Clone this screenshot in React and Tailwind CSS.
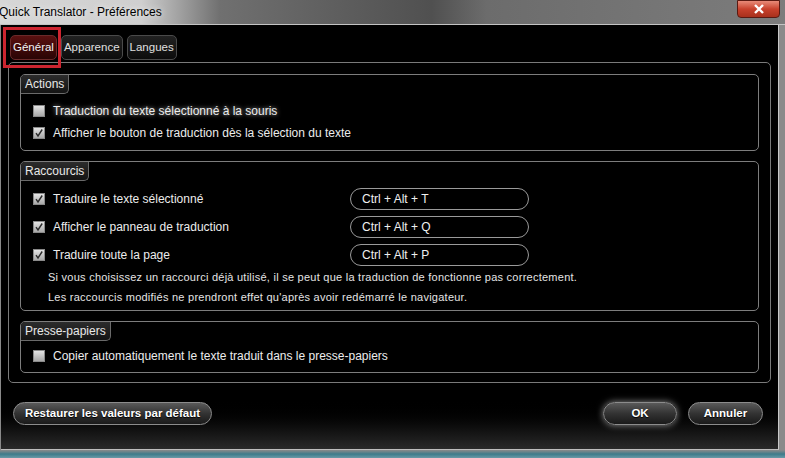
import React from "react";

const font = { fontFamily: '"Liberation Sans", Arial, sans-serif' };

const Check = ({ on }) => (
  <span className="w-[12px] h-[12px] shrink-0 border border-[#8a8a8a] bg-gradient-to-b from-[#e4e4e4] to-[#a8a8a8] flex items-center justify-center">
    {on && (
      <svg width="10" height="10" viewBox="0 0 10 10">
        <path d="M2 5.2 L4 8 L8.2 1.5" stroke="#2a2a2a" strokeWidth="1.4" fill="none" />
      </svg>
    )}
  </span>
);

const Item = ({ on, glow, children }) => (
  <div className="flex items-center h-[22px] pl-[12px] gap-[8px]">
    <Check on={on} />
    <span
      className={
        "text-[12px] text-[#ececec] " +
        (glow ? "[text-shadow:0_0_4px_rgba(255,255,255,0.7)]" : "")
      }
    >
      {children}
    </span>
  </div>
);

const Group = ({ label, children, cls }) => (
  <div className={"border border-[#7d7d7d] rounded-[5px] " + cls}>
    <div className="flex w-fit items-center h-[19px] px-[4px] text-[12px] text-[#e8e8e8] bg-gradient-to-b from-[#2c2c2c] to-[#141414] border-r border-b border-[#6a6a6a] rounded-tl-[4px] rounded-br-[5px]">
      {label}
    </div>
    {children}
  </div>
);

const Key = ({ children }) => (
  <div className="w-[179px] h-[22px] rounded-full border border-[#9a9a9a] pl-[11px] flex items-center text-[12px] text-[#f0f0f0]">
    {children}
  </div>
);

const Btn = ({ children, cls }) => (
  <button
    className={
      "h-[23px] rounded-full border border-[#8c8c8c] bg-gradient-to-b from-[#5a5a5a] via-[#333] to-[#1a1a1a] text-white font-bold text-[11.5px] [text-shadow:0_1px_1px_#000] " +
      cls
    }
  >
    {children}
  </button>
);

const Tab = ({ active, children }) => (
  <div
    className={
      "px-[2px] flex items-center text-[11.5px] rounded-[5px] border " +
      (active
        ? "text-[#f2f2f2] bg-gradient-to-b from-[#5a1010] to-[#2a0505] border-[#6a2a2a]"
        : "text-[#e0e0e0] bg-gradient-to-b from-[#222] to-[#0c0c0c] border-[#4a4a4a]")
    }
  >
    {children}
  </div>
);

const App = () => {
  return (
    <div
      className="w-[785px] h-[458px] relative overflow-hidden flex flex-col bg-[#8a8a8a]"
      style={font}
    >
      {/* title bar */}
      <div className="h-[25px] shrink-0 flex items-center bg-[linear-gradient(to_right,#d6d6d6_0%,#cfcfcf_18%,#707070_28%,#505050_55%,#6c6c6c_62%,#7c7c7c_100%)] border-b border-[#c4c4c4]">
        <span className="text-[12px] text-black -ml-[1px] [text-shadow:0_0_6px_rgba(255,255,255,0.9)]">
          Quick Translator - Préférences
        </span>
      </div>
      <div className="absolute top-0 right-[5px] w-[43px] h-[18px] rounded-b-[4px] border border-[#5a1a12] bg-gradient-to-b from-[#e88a78] via-[#c8412c] to-[#a8301c] flex items-center justify-center">
        <svg width="12" height="10" viewBox="0 0 12 10">
          <path d="M2 1 L10 9 M10 1 L2 9" stroke="#fff" strokeWidth="2.4" />
        </svg>
      </div>

      {/* body */}
      <div className="flex-1 flex flex-col ml-[1px] mr-[6px] border-r border-[#c8c8c8] border-b border-b-[#bdbdbd] bg-gradient-to-b from-black from-[88%] to-[#2a2a2a]">
        {/* tabs */}
        <div className="flex gap-[4px] ml-[9px] mt-[10px] h-[25px] items-stretch">
          <Tab active>Général</Tab>
          <Tab>Apparence</Tab>
          <Tab>Langues</Tab>
        </div>

        {/* panel */}
        <div className="mx-[7px] mt-[2px] h-[321px] border border-[#7a7a7a] rounded-[5px] px-[11px] pt-[11px] flex flex-col gap-[10px]">
          <Group label="Actions" cls="h-[77px]">
            <div className="pt-[6px]">
              <Item glow>Traduction du texte sélectionné à la souris</Item>
              <Item on>Afficher le bouton de traduction dès la sélection du texte</Item>
            </div>
          </Group>

          <Group label="Raccourcis" cls="h-[150px]">
            <div className="pt-[7px] flex flex-col gap-[6px]">
              {[
                ["Traduire le texte sélectionné", "Ctrl + Alt + T"],
                ["Afficher le panneau de traduction", "Ctrl + Alt + Q"],
                ["Traduire toute la page", "Ctrl + Alt + P"],
              ].map(([t, k]) => (
                <div key={t} className="flex items-center">
                  <div className="w-[329px]">
                    <Item on>{t}</Item>
                  </div>
                  <Key>{k}</Key>
                </div>
              ))}
            </div>
            <div className="pl-[27px] pt-[1px] text-[11px] text-[#e4e4e4] tracking-[0.25px] leading-[20px]">
              <div>
                Si vous choisissez un raccourci déjà utilisé, il se peut que la traduction de fonctionne pas correctement.
              </div>
              <div>
                Les raccourcis modifiés ne prendront effet qu'après avoir redémarré le navigateur.
              </div>
            </div>
          </Group>

          <Group label="Presse-papiers" cls="h-[52px]">
            <div className="pt-[4px]">
              <Item>Copier automatiquement le texte traduit dans le presse-papiers</Item>
            </div>
          </Group>
        </div>

        {/* buttons */}
        <div className="flex items-center mt-[19px] pl-[12px] pr-[15px]">
          <Btn cls="w-[199px]">Restaurer les valeurs par défaut</Btn>
          <div className="flex-1" />
          <Btn cls="w-[74px] shadow-[0_0_7px_rgba(255,255,255,0.55)]">OK</Btn>
          <Btn cls="w-[75px] ml-[11px]">Annuler</Btn>
        </div>
        <div className="flex-1" />
      </div>
      <div className="h-[8px] shrink-0 bg-gradient-to-b from-[#8a8a8a] via-[#3d7b8a] to-[#6a9aa8]" />

      {/* highlight annotation */}
      <div className="absolute left-[3px] top-[27px] w-[58px] h-[41px] border-[3px] border-[#cc2530] pointer-events-none" />
    </div>
  );
};

export default App;
